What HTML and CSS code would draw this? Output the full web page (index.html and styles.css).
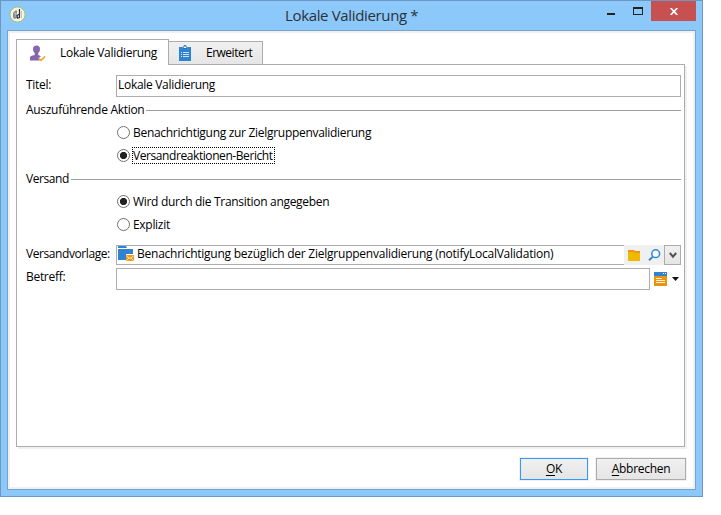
FILE: index.html
```html
<!DOCTYPE html>
<html lang="de">
<head>
<meta charset="utf-8">
<title>Lokale Validierung</title>
<link rel="stylesheet" href="styles.css">
</head>
<body>
<div class="window">
  <header class="titlebar">
    <svg class="app-icon" width="17" height="17" viewBox="0 0 17 17"><circle cx="8.5" cy="8.5" r="7.6" fill="#f4f4ec" stroke="#a3bf61" stroke-width="1"/><path d="M4 7l3-3 1 1v7l-3 1-1-2z" fill="#8a8a88"/><path d="M5 8l2-1v4" fill="none" stroke="#c8c8c4"/><path d="M10.500 3v8M8 9.500l2.500-1.500v3.500l-2 .5z" fill="none" stroke="#303030" stroke-width="1.200"/><path d="M12.500 5v7" stroke="#c5c5bf"/></svg>
    <h1 class="title"><span class="t-title">Lokale Validierung *</span></h1>
    <div class="controls">
      <svg class="min" width="8" height="2" viewBox="0 0 8 2"><path d="M0 0h8v2H0z" fill="#222"/></svg>
      <svg class="max" width="10" height="8" viewBox="0 0 10 8"><path fill-rule="evenodd" d="M0 0h10v8H0zM1 2v5h8V2z" fill="#222"/></svg>
      <div class="close"><svg width="8" height="7" viewBox="0 0 8 7"><path d="M.7 0l6.600 7M7.300 0L.7 7" stroke="#fff" stroke-width="1.700"/></svg></div>
    </div>
  </header>
  <main class="client">
    <nav class="tabs">
      <div class="tab active">
        <svg width="17" height="17" viewBox="0 0 17 17"><path d="M7.500.5c2.300 0 3.500 1.400 3.500 3.500 0 1.900-.8 3.200-1.700 4v2l2.700 1.200-1.700 1.300-.9.900 1.600 2.100H1v-2.700c0-1.200.8-1.700 1.800-2L5.700 10V8C4.800 7.200 4 5.900 4 4 4 1.900 5.200.5 7.500.5z" fill="#8467ae"/><path d="M9.800 13.200l2.300 2.200 4-4" fill="none" stroke="#f4a42d" stroke-width="1.500"/></svg>
        <span class="t-lv">Lokale Validierung</span>
      </div>
      <div class="tab">
        <svg width="12" height="16" viewBox="0 0 12 16"><path d="M0 2h3v2h6V2h3v14H0z" fill="#2f83d0"/><path d="M3.500 3.500v-1L5 2V.7h2V2l1.500.5v1z" fill="#fff" stroke="#2471ba"/><path d="M2 7.500h1M4 7.500h6M2 9.500h1M4 9.500h6M2 11.500h1M4 11.500h6" stroke="#c9e2f8"/></svg>
        <span class="t-erw">Erweitert</span>
      </div>
    </nav>
    <section class="panel">
      <div class="row titel"><label class="t-titel">Titel:</label><div class="field"><span class="t-lv">Lokale Validierung</span></div></div>
      <div class="group"><span class="t-akt">Auszuführende Aktion</span><i></i></div>
      <div class="radio"><b></b><span class="t-ben">Benachrichtigung zur Zielgruppenvalidierung</span></div>
      <div class="radio on focus"><b></b><span class="t-ber">Versandreaktionen-Bericht</span><svg class="focusbox" width="143" height="17"><path d="M0 .5h143M0 16.500h143M.5 0v17M142.500 0v17" fill="none" stroke="#000" stroke-dasharray="1 1" shape-rendering="crispEdges"/></svg></div>
      <div class="group second"><span class="t-vers">Versand</span><i></i></div>
      <div class="radio"><b class="checked"></b><span class="t-wird">Wird durch die Transition angegeben</span></div>
      <div class="radio"><b></b><span class="t-exp">Explizit</span></div>
      <div class="row vorlage"><label class="t-vorl">Versandvorlage:</label>
        <div class="combo">
          <svg class="tpl" width="17" height="16" viewBox="0 0 17 16"><path d="M0 0h8l1 2H0zM0 3h15v5H8v6H0z" fill="#2f83d0"/><path d="M8 9h8v6H8z" fill="#f09a1a"/><path d="M8.500 10l3.500 2.500L15.500 10M8.500 14.500l2.500-2.500M15.500 14.500L13 12" fill="none" stroke="#ffe1ae"/></svg>
          <span class="t-long">Benachrichtigung bezüglich der Zielgruppenvalidierung (notifyLocalValidation)</span>
          <div class="tools">
            <svg width="12" height="11" viewBox="0 0 12 11"><path d="M0 0h6l1 1h5v2H0z" fill="#ef9411"/><path d="M0 2h6l1 1h5v8H0z" fill="#efb900"/></svg>
            <svg width="13" height="12" viewBox="0 0 13 12"><circle cx="7.700" cy="4.700" r="3.900" fill="#f7fafc" stroke="#3187d0" stroke-width="1.500"/><path d="M4.800 7.700L1 11.300" stroke="#3187d0" stroke-width="1.900"/></svg>
          </div>
          <div class="drop"><svg width="8" height="7" viewBox="0 0 8 7"><path d="M.8 1L4 4.700 7.200 1" fill="none" stroke="#505050" stroke-width="2"/></svg></div>
        </div>
      </div>
      <div class="row betreff"><label class="t-betr">Betreff:</label><div class="field"></div>
        <svg class="form-icon" width="13" height="14" viewBox="0 0 13 14"><path d="M0 0h13v4H0z" fill="#2f83d0"/><path d="M9 1.500h1M11 1.500h1" stroke="#fff"/><path d="M0 4h13v10H0z" fill="#ef920b"/><path d="M2 6.500h6M2 8.500h9M2 10.500h9" stroke="#fff3df"/></svg>
        <svg class="caret" width="7" height="4" viewBox="0 0 7 4"><path d="M0 0h7L3.500 4z" fill="#111"/></svg>
      </div>
    </section>
    <footer class="buttons">
      <button class="btn ok"><span class="t-ok"><u>O</u>K</span></button>
      <button class="btn cancel"><span class="t-abb"><u>A</u>bbrechen</span></button>
    </footer>
  </main>
</div>
</body>
</html>
```
FILE: styles.css
```css
* { box-sizing: border-box; }
body { margin: 0; background: #fff; font: 12px/16px "Open Sans", "Noto Sans", sans-serif; color: #000; }
svg { display: block; flex: none; }
span, label { white-space: nowrap; }
.window { width: 703px; height: 497px; border: 1px solid #6a98c3; background: #8dc8fb; padding: 0 6px 6px; }
.titlebar { height: 29px; display: flex; position: relative; }
.app-icon { margin: 5px 0 0 2px; }
.title { margin: 0; flex: 1; padding: 4px 0 0 259px; font-size: 15px; line-height: 20px; font-weight: 400; color: #2a3238; }
.controls { display: flex; align-items: flex-start; }
.min { margin: 12px 18px 0 0; }
.max { margin: 6px 8px 0 0; }
.close { width: 45px; height: 20px; background: #c75050; display: flex; align-items: center; justify-content: center; }
.client { height: 460px; border: 1px solid #75a4cf; background: #fff; box-shadow: inset 0 0 0 2px #f0f0f0; padding: 8px 10px 0 8px; }
.tabs { display: flex; align-items: flex-end; height: 26px; }
.tab { height: 24px; width: 95px; border: 1px solid #acacac; background: linear-gradient(#f0f0f0, #e6e6e6); display: flex; align-items: center; padding-left: 10px; margin-left: -1px; }
.tab svg + span { margin-left: 15px; }
.tab.active { height: 26px; width: 153px; border-bottom: 0; background: #fff; z-index: 1; margin: 0; padding: 1px 0 0 12px; }
.tab.active svg + span { margin-left: 14px; }
.panel { height: 383px; width: 669px; margin-top: -1px; border: 1px solid #acacac; box-shadow: 2px 2px 0 #f0f0f0; padding: 10px 3px 0 9px; }
.row { display: flex; }
.row label { width: 90px; flex: none; }
.field { flex: 1; height: 22px; border: 1px solid #abadb3; padding: 1px; }
.titel label { padding-top: 2px; }
.group { display: flex; align-items: center; height: 23px; margin-top: 2px; }
.group span { padding-bottom: 1px; }
.group i { flex: 1; height: 1px; background: #a0a0a0; margin-left: 2px; }
.group.second { margin-top: 1px; }
.radio { display: flex; align-items: center; height: 23px; padding-left: 91px; position: relative; }
.group + .radio { margin-top: -1px; }
.radio b { width: 13px; height: 13px; border: 1px solid #707070; border-radius: 50%; margin-right: 3px; }
.radio.on b, .radio b.checked { background: radial-gradient(circle, #212121 3.2px, #fff 4px); }
.focusbox { position: absolute; left: 106px; top: 3px; }
.vorlage { margin-top: 9px; }
.combo { flex: 1; display: flex; height: 20px; border: 1px solid #abadb3; border-right: 0; }
.vorlage label { padding-top: 1px; }
.tpl { margin: 0 2px 0 1px; }
.tools { margin-left: auto; width: 40px; background: #f0f0f0; display: flex; align-items: center; padding-left: 4px; gap: 8px; margin-top: -1px; margin-bottom: -1px; }
.drop { width: 17px; margin: -1px 0; border: 1px solid #acacac; background: linear-gradient(#f0f0f0, #e5e5e5); display: flex; align-items: center; justify-content: center; }
.betreff { margin-top: 3px; }
.betreff label { padding-top: 1px; }
.form-icon { margin: 4px 5px 0 4px; }
.caret { margin: 9px 2px 0 0; }
.buttons { display: flex; justify-content: flex-end; gap: 8px; margin-top: 11px; margin-right: -1px; }
.btn { height: 22px; border: 1px solid #acacac; background: linear-gradient(#f0f0f0, #e5e5e5); box-shadow: 0 0 0 1px #f0f0f0; font: inherit; line-height: 16px; padding: 0; color: #000; }
.ok { width: 68px; border-color: #3399ff; }
.cancel { width: 90px; }
u { text-underline-offset: 2px; }
.t-title { letter-spacing: -.35px; }
.t-lv, .t-titel, .t-akt, .t-ben, .t-wird, .t-exp, .t-betr, .t-ok, .t-abb { letter-spacing: -.3px; }
.t-erw { letter-spacing: -.5px; }
.t-vers, .t-vorl { letter-spacing: -.42px; }
.t-ber { letter-spacing: -.42px; }
.t-long { letter-spacing: -.24px; }
```
